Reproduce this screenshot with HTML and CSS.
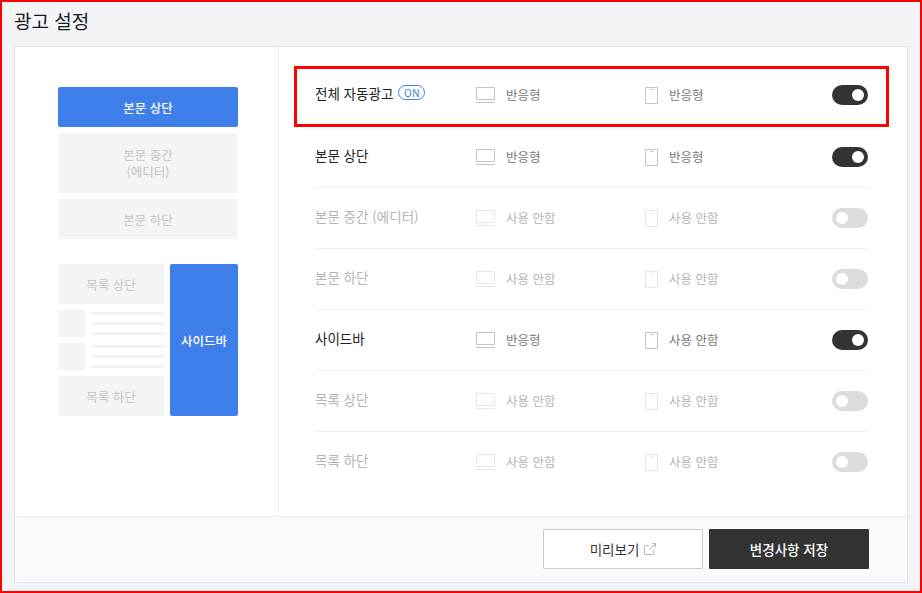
FILE: index.html
```html
<!DOCTYPE html>
<html lang="ko">
<head>
<meta charset="utf-8">
<title>광고 설정</title>
<link rel="stylesheet" href="styles.css">
</head>
<body>
<svg class="defs" width="0" height="0">
  <symbol id="pc" viewBox="0 0 19 16"><path d="M.5.5h18v12H.5z" fill="none" stroke="currentColor"/><path d="M0 15.5h19" stroke="currentColor"/></symbol>
  <symbol id="mobile" viewBox="0 0 13 17"><path d="M.5.5h12v16H.5z" fill="none" stroke="currentColor"/><path d="M5 2.5h3" stroke="currentColor"/></symbol>
</svg>
<div class="page">
  <h1 class="title">광고 설정</h1>
  <div class="card">
    <div class="main">
      <aside class="preview">
        <div class="slot active">본문 상단</div>
        <div class="slot tall">본문 중간<br>(에디터)</div>
        <div class="slot">본문 하단</div>
        <div class="lower">
          <div class="list-col">
            <div class="slot">목록 상단</div>
            <div class="post"><span class="thumb"></span><span class="lines"><i></i><i></i><i></i></span></div>
            <div class="post"><span class="thumb"></span><span class="lines"><i></i><i></i><i></i></span></div>
            <div class="slot">목록 하단</div>
          </div>
          <div class="slot active side">사이드바</div>
        </div>
      </aside>
      <section class="rows">
        <div class="row highlight">
          <div class="name">전체 자동광고<span class="badge">ON</span></div>
          <div class="dev pc"><svg class="ic-pc"><use href="#pc"/></svg>반응형</div>
          <div class="dev"><svg class="ic-mo"><use href="#mobile"/></svg>반응형</div>
          <span class="toggle on"></span>
        </div>
        <div class="row">
          <div class="name">본문 상단</div>
          <div class="dev pc"><svg class="ic-pc"><use href="#pc"/></svg>반응형</div>
          <div class="dev"><svg class="ic-mo"><use href="#mobile"/></svg>반응형</div>
          <span class="toggle on"></span>
        </div>
        <div class="row off">
          <div class="name">본문 중간 (에디터)</div>
          <div class="dev pc"><svg class="ic-pc"><use href="#pc"/></svg>사용 안함</div>
          <div class="dev"><svg class="ic-mo"><use href="#mobile"/></svg>사용 안함</div>
          <span class="toggle"></span>
        </div>
        <div class="row off">
          <div class="name">본문 하단</div>
          <div class="dev pc"><svg class="ic-pc"><use href="#pc"/></svg>사용 안함</div>
          <div class="dev"><svg class="ic-mo"><use href="#mobile"/></svg>사용 안함</div>
          <span class="toggle"></span>
        </div>
        <div class="row">
          <div class="name">사이드바</div>
          <div class="dev pc"><svg class="ic-pc"><use href="#pc"/></svg>반응형</div>
          <div class="dev"><svg class="ic-mo"><use href="#mobile"/></svg>사용 안함</div>
          <span class="toggle on"></span>
        </div>
        <div class="row off">
          <div class="name">목록 상단</div>
          <div class="dev pc"><svg class="ic-pc"><use href="#pc"/></svg>사용 안함</div>
          <div class="dev"><svg class="ic-mo"><use href="#mobile"/></svg>사용 안함</div>
          <span class="toggle"></span>
        </div>
        <div class="row off last">
          <div class="name">목록 하단</div>
          <div class="dev pc"><svg class="ic-pc"><use href="#pc"/></svg>사용 안함</div>
          <div class="dev"><svg class="ic-mo"><use href="#mobile"/></svg>사용 안함</div>
          <span class="toggle"></span>
        </div>
      </section>
    </div>
    <footer class="footer">
      <button class="btn ghost">미리보기<svg class="ext" viewBox="0 0 12 12"><path d="M9.5 7v4.5h-9v-9H5M5.5 6.5l6-6M7.5.5h4v4" fill="none" stroke="currentColor"/></svg></button>
      <button class="btn dark">변경사항 저장</button>
    </footer>
  </div>
</div>
</body>
</html>
```
FILE: styles.css
```css
* { box-sizing: border-box; }
html, body { margin: 0; padding: 0; }
body { font-family: "Noto Sans CJK KR", "Noto Sans", sans-serif; }
.defs { position: absolute; }
.page {
  width: 922px; height: 593px;
  border: 2px solid #f00;
  background: #f3f4f6;
  padding: 0 12px 8px;
  display: flex; flex-direction: column;
}
.title {
  margin: 0; height: 44px; padding-top: 4px;
  font-size: 19px; font-weight: 400; line-height: 30px; color: #1a1a1a;
}
.card {
  flex: 1; min-height: 0;
  background: #fff; border: 1px solid #e1e4ec;
  display: flex; flex-direction: column;
}
.main { flex: 1; display: flex; min-height: 0; }
.preview {
  width: 264px; border-right: 1px solid #eef0f4;
  padding: 40px 40px 0 43px;
  display: flex; flex-direction: column; gap: 6px;
}
.slot {
  height: 40px; background: #f4f4f4; border-radius: 2px;
  color: #c4c4c4; font-size: 12.5px; line-height: 17px; text-align: center;
  display: flex; align-items: center; justify-content: center; flex: none;
}
.slot.tall { height: 60px; }
.slot.active { background: #3f7fe9; color: #fff; font-weight: 500; }
.lower { display: flex; gap: 6px; margin-top: 19px; }
.list-col { width: 106px; display: flex; flex-direction: column; gap: 6px; }
.side { width: 68px; height: 152px; }
.post { display: flex; gap: 6px; height: 27px; }
.thumb { width: 27px; background: #f4f4f4; border-radius: 2px; flex: none; }
.lines { flex: 1; display: flex; flex-direction: column; justify-content: space-between; padding: 2px 0 2px; }
.lines i { display: block; height: 3px; background: #f4f4f4; }
.rows { flex: 1; padding: 17px 39px 0 36px; }
.row {
  position: relative;
  height: 61px; display: flex; align-items: center;
  border-bottom: 1px solid #f0f0f0;
  font-size: 13.5px; color: #222;
}
.row.last { height: 60px; border-bottom: 0; }
.row.highlight { height: 63px; border-bottom: 0; padding-bottom: 1px; }
.row.highlight::after {
  content: ""; position: absolute;
  left: -21px; right: -21px; top: 2px; bottom: 0;
  border: 3px solid #f00; pointer-events: none;
}
.name { width: 161px; color: #222; display: flex; align-items: center; padding-bottom: 5px; }
.badge {
  margin-left: 5px; width: 27px; height: 15px; flex: none;
  border: 1px solid #3f7fe9; border-radius: 8px;
  color: #3f7fe9; font-size: 10.5px; line-height: 13px; text-align: center;
}
.dev { display: flex; align-items: center; color: #777; font-size: 12.5px; padding-bottom: 2px; }
.dev.pc { width: 169px; }
.dev svg { display: block; flex: none; color: #c4c4c4; margin-top: 2px; }
.ic-pc { width: 19px; height: 16px; margin-right: 11px; }
.ic-mo { width: 13px; height: 17px; margin-right: 11px; }
.toggle {
  margin-left: auto; position: relative;
  width: 36px; height: 20px; border-radius: 10px; background: #dcdcdc;
}
.toggle::after {
  content: ""; position: absolute; top: 4px; left: 4px;
  width: 12px; height: 12px; border-radius: 50%; background: #fff;
}
.toggle.on { background: #333; }
.toggle.on::after { left: 20px; }
.off .name, .off .dev { color: #b4b4b4; }
.off .dev svg { color: #e6e6e6; }
.footer {
  height: 66px; flex: none;
  background: #f9fafc; border-top: 1px solid #eceef3;
  display: flex; justify-content: flex-end; align-items: center; gap: 6px;
  padding: 0 38px 2px 0;
}
.btn {
  width: 160px; height: 40px; font-family: inherit; font-size: 13.5px;
  display: flex; align-items: center; justify-content: center; border-radius: 1px;
}
.ghost { background: #fff; border: 1px solid #c5ccd8; color: #333; }
.dark { background: #333; border: 0; color: #fff; font-weight: 500; }
.ext { width: 12px; height: 12px; margin-left: 5px; color: #bbb; }
```
